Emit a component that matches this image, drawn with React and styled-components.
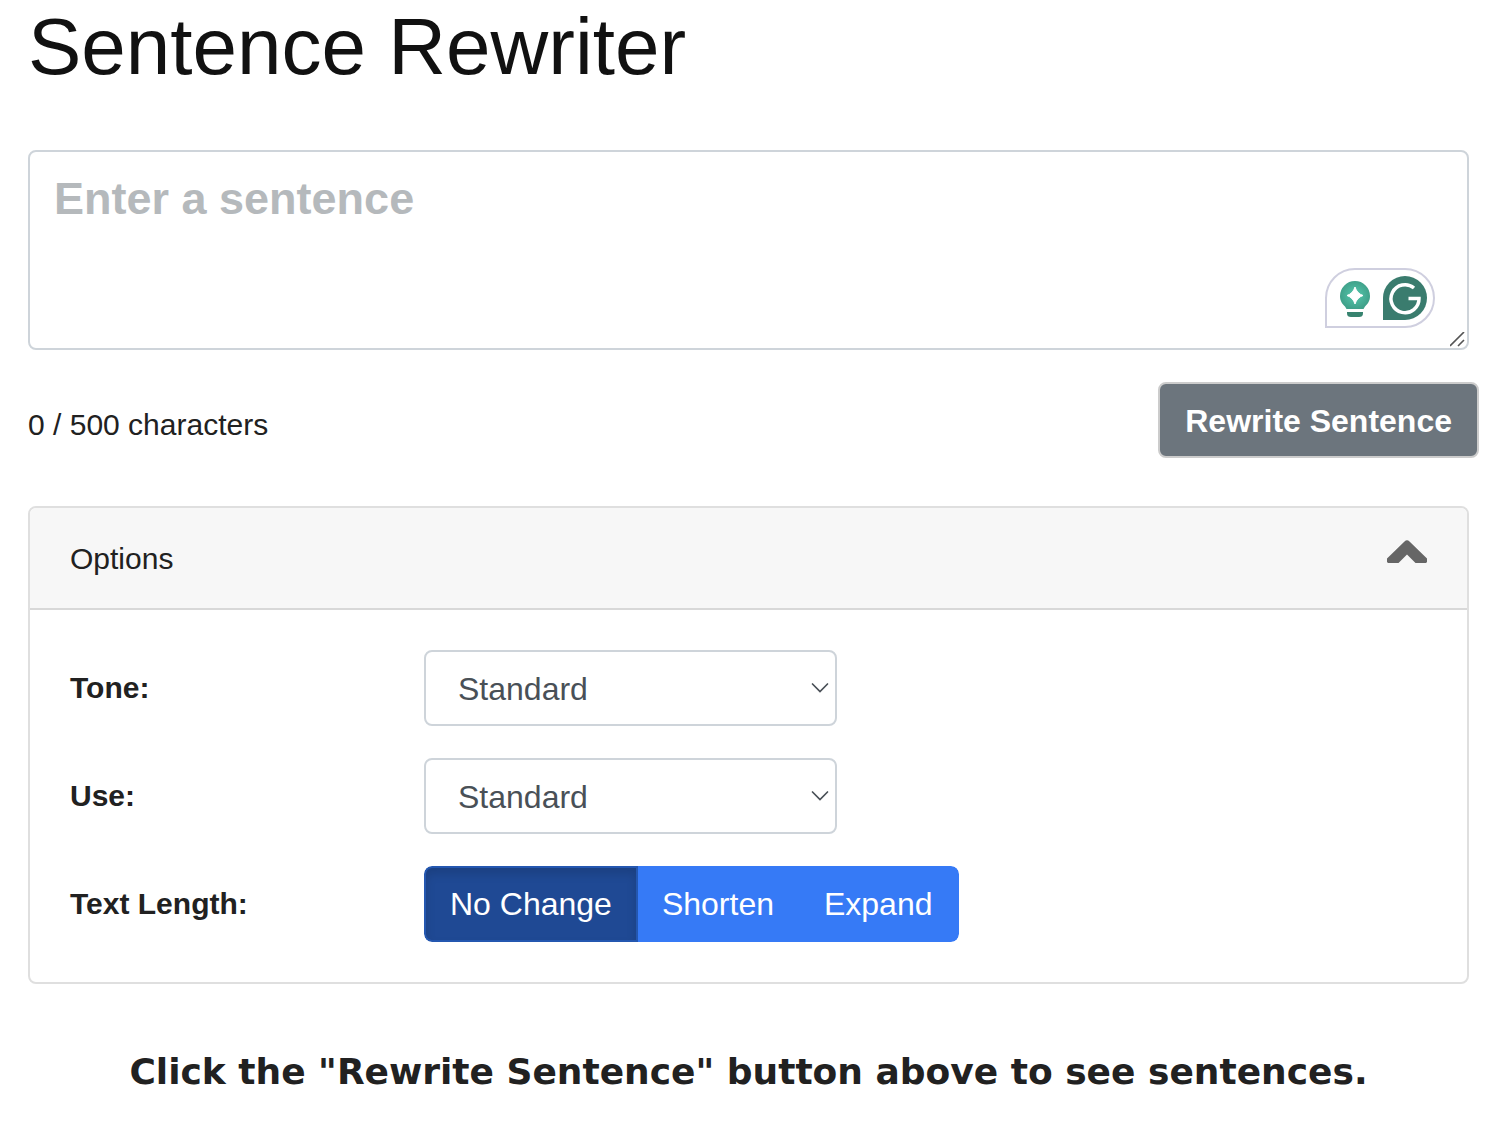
import React, { useState } from 'react';
import styled, { createGlobalStyle } from 'styled-components';

const GlobalStyle = createGlobalStyle`
  * {
    box-sizing: border-box;
  }

  body {
    margin: 0;
    background-color: #fff;
    color: #212121;
    font-family: 'Liberation Sans', Arial, sans-serif;
    font-size: 30px;
    line-height: 44px;
  }
`;

const Page = styled.main`
  padding: 0 31px 40px 28px;
`;

const Title = styled.h1`
  margin: 0 0 56px;
  color: #111;
  font-size: 80px;
  font-weight: 400;
  line-height: 94px;
`;

const EditorWrap = styled.div`
  position: relative;
  margin-right: 10px;
`;

const SentenceInput = styled.textarea`
  display: block;
  width: 100%;
  height: 200px;
  padding: 12px 24px;
  border: 2px solid #ced4da;
  border-radius: 8px;
  color: #495057;
  font-family: inherit;
  font-size: 45px;
  font-weight: 700;
  line-height: 70px;
  resize: none;

  &::placeholder {
    color: #b5b9bc;
    opacity: 1;
  }
`;

const ResizeGrip = styled.svg`
  position: absolute;
  right: 3px;
  bottom: 2px;
  pointer-events: none;
`;

const AssistantBadge = styled.div`
  position: absolute;
  right: 34px;
  bottom: 22px;
  display: flex;
  align-items: center;
  justify-content: space-between;
  width: 110px;
  height: 60px;
  padding: 0 6px 0 11px;
  border: 2px solid #cfcfdf;
  border-radius: 30px 30px 30px 0;
  background-color: #fff;
`;

const ActionRow = styled.div`
  display: flex;
  align-items: center;
  justify-content: space-between;
  margin: 32px 0 48px;
`;

const Counter = styled.span`
  padding-top: 10px;
`;

const RewriteButton = styled.button`
  height: 76px;
  padding: 2px 25px 0;
  border: 2px solid #ccc;
  border-radius: 8px;
  background-color: #6c757d;
  color: #fff;
  font-family: inherit;
  font-size: 32px;
  font-weight: 700;
  cursor: pointer;

  &:hover {
    background-color: #5a6268;
  }
`;

const Card = styled.section`
  margin-right: 10px;
  border: 2px solid #dfdfdf;
  border-radius: 8px;
  overflow: hidden;
`;

const CardHeader = styled.button`
  display: flex;
  align-items: center;
  justify-content: space-between;
  width: 100%;
  height: 102px;
  padding: 2px 39px 0 40px;
  border: none;
  border-bottom: 2px solid #d8d8d8;
  background-color: #f7f7f7;
  color: inherit;
  font: inherit;
  text-align: left;
  cursor: pointer;

  svg {
    margin-bottom: 14px;
  }
`;

const CardBody = styled.div`
  display: grid;
  gap: 32px;
  padding: 40px;
`;

const OptionRow = styled.div`
  display: grid;
  grid-template-columns: 354px 1fr;
  align-items: center;
`;

const OptionLabel = styled.label`
  font-weight: 700;
`;

const SelectWrap = styled.div`
  position: relative;
  max-width: 413px;

  svg {
    position: absolute;
    top: 32px;
    right: 7px;
    pointer-events: none;
  }
`;

const Select = styled.select`
  display: block;
  width: 100%;
  height: 76px;
  padding: 2px 32px 0;
  border: 2px solid #ced4da;
  border-radius: 8px;
  background-color: #fff;
  color: #495057;
  font-family: inherit;
  font-size: 32px;
  appearance: none;
`;

const ButtonGroup = styled.div`
  display: flex;
  justify-self: start;
  border-radius: 8px;
  overflow: hidden;
`;

const ToggleLabel = styled.label`
  position: relative;
  z-index: ${(props) => (props.$active ? 1 : 0)};
  display: flex;
  align-items: center;
  height: 76px;
  padding: 0 24px;
  border: 2px solid ${(props) => (props.$active ? '#2457b0' : '#367af6')};
  background-color: ${(props) => (props.$active ? '#1f4994' : '#367af6')};
  box-shadow: ${(props) => (props.$active ? 'inset 0 6px 10px rgba(0, 0, 0, 0.125)' : 'none')};
  color: #fff;
  font-size: 32px;
  cursor: pointer;

  &:first-child {
    border-radius: 8px 0 0 8px;
  }

  &:last-child {
    border-radius: 0 8px 8px 0;
  }

  & + & {
    margin-left: -2px;
  }
`;

const ToggleInput = styled.input`
  position: absolute;
  inset: 0;
  width: 100%;
  height: 100%;
  margin: 0;
  opacity: 0;
  cursor: pointer;
`;

const Hint = styled.p`
  margin: 64px 10px 0 0;
  font-family: Verdana, 'DejaVu Sans', sans-serif;
  font-size: 36px;
  font-weight: 700;
  line-height: 48px;
  text-align: center;
`;

const LENGTHS = ['No Change', 'Shorten', 'Expand'];
const TONES = ['Standard', 'Formal', 'Casual'];
const USES = ['Standard', 'Essay', 'Email'];
const MAX_CHARS = 500;

function BulbIcon() {
  return (
    <svg width="34" height="42" viewBox="0 0 34 42" aria-hidden="true">
      <defs>
        <radialGradient id="bulb">
          <stop offset="0" stopColor="#56c9ae" />
          <stop offset="1" stopColor="#40a18a" />
        </radialGradient>
      </defs>
      <path d="M17 4a15 15 0 0 1 15 15c0 5-2.400 8-5 10.500L25.500 32h-17L7 29.500C4.400 27 2 24 2 19A15 15 0 0 1 17 4z" fill="url(#bulb)" />
      <path d="M17 10q2 6.500 8 8.500-6 2-8 8.500-2-6.500-8-8.500 6-2 8-8.500z" fill="#fff" stroke="#fff" strokeLinejoin="round" />
      <path d="M9 35h16v1c0 3-1.500 4-4 4h-8c-2.500 0-4-1-4-4z" fill="#37836f" />
    </svg>
  );
}

function GIcon() {
  return (
    <svg width="44" height="44" viewBox="0 0 44 44" aria-hidden="true">
      <path d="M22 0a22 22 0 0 1 0 44H0V22A22 22 0 0 1 22 0z" fill="#3a7c6e" />
      <path d="M31 12A14 14 0 1 0 36 22.500H25.500" fill="none" stroke="#fff" strokeWidth="3.500" />
    </svg>
  );
}

function OptionSelect({ id, label, options }) {
  return (
    <OptionRow>
      <OptionLabel htmlFor={id}>{label}</OptionLabel>
      <SelectWrap>
        <Select id={id}>
          {options.map((option) => (
            <option key={option}>{option}</option>
          ))}
        </Select>
        <svg width="19" height="12" viewBox="0 0 19 12" aria-hidden="true">
          <path d="M1.500 2L9 9.500 16.500 2" fill="none" stroke="#495057" strokeWidth="1.700" strokeLinecap="round" />
        </svg>
      </SelectWrap>
    </OptionRow>
  );
}

function App() {
  const [text, setText] = useState('');
  const [open, setOpen] = useState(true);
  const [length, setLength] = useState('No Change');

  return (
    <Page>
      <GlobalStyle />
      <Title>Sentence Rewriter</Title>

      <EditorWrap>
        <SentenceInput
          aria-label="Sentence"
          placeholder="Enter a sentence"
          maxLength={MAX_CHARS}
          value={text}
          onChange={(e) => setText(e.target.value)}
        />
        <AssistantBadge>
          <BulbIcon />
          <GIcon />
        </AssistantBadge>
        <ResizeGrip width="16" height="16" viewBox="0 0 16 16" aria-hidden="true">
          <path d="M0 14L14 0M8 14l6-6" stroke="#555" strokeWidth="1.600" />
        </ResizeGrip>
      </EditorWrap>

      <ActionRow>
        <Counter>{text.length} / {MAX_CHARS} characters</Counter>
        <RewriteButton type="button">Rewrite Sentence</RewriteButton>
      </ActionRow>

      <Card>
        <CardHeader type="button" aria-expanded={open} onClick={() => setOpen(!open)}>
          Options
          <svg width="42" height="26" viewBox="0 0 42 26" aria-hidden="true">
            <path d="M1 19.500L18.500 2.500Q21 0 23.500 2.500L41 19.500V23l-1 1H29.500L21 15.500 12.500 24H2l-1-1z" fill="#666" />
          </svg>
        </CardHeader>
        {open && (
          <CardBody>
            <OptionSelect id="tone" label="Tone:" options={TONES} />
            <OptionSelect id="use" label="Use:" options={USES} />
            <OptionRow>
              <OptionLabel as="span" id="length-label">Text Length:</OptionLabel>
              <ButtonGroup role="radiogroup" aria-labelledby="length-label">
                {LENGTHS.map((item) => (
                  <ToggleLabel key={item} $active={item === length}>
                    <ToggleInput
                      type="radio"
                      name="length"
                      checked={item === length}
                      onChange={() => setLength(item)}
                    />
                    {item}
                  </ToggleLabel>
                ))}
              </ButtonGroup>
            </OptionRow>
          </CardBody>
        )}
      </Card>

      <Hint>Click the "Rewrite Sentence" button above to see sentences.</Hint>
    </Page>
  );
}

export default App;
